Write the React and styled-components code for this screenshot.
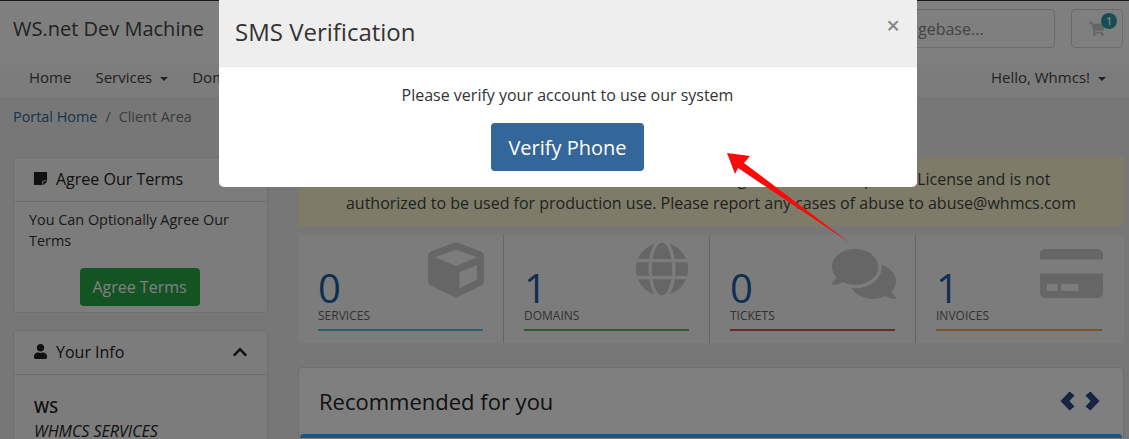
import React from "react";
import styled, { createGlobalStyle } from "styled-components";
import {
  FaStickyNote,
  FaUser,
  FaChevronUp,
  FaCube,
  FaGlobe,
  FaComments,
  FaCreditCard,
  FaShoppingCart,
} from "react-icons/fa";

const GlobalStyle = createGlobalStyle`
  html, body {
    margin: 0;
    padding: 0;
  }

  body {
    background: #eeeeee;
    color: #333;
    font-family: "Open Sans", "Liberation Sans", sans-serif;
    font-size: 14.4px;
    overflow: hidden;
  }

  * {
    box-sizing: border-box;
  }
`;

const Page = styled.div`
  height: 439px;
  overflow: hidden;
  position: relative;
  width: 1129px;
`;

const TopBar = styled.header`
  align-items: center;
  background: #fff;
  border-top: 1px solid #333;
  display: flex;
  height: 65px;
  padding: 8px 6px 17px 13px;
`;

const Brand = styled.div`
  color: #444;
  flex: 1;
  font-size: 20px;
`;

const Search = styled.div`
  align-items: center;
  border: 1px solid #d4d4d4;
  border-radius: 4px;
  color: #888;
  display: flex;
  font-size: 16px;
  height: 39px;
  margin-right: 16px;
  padding: 0 12px 0 14px;
  width: 300px;
`;

const Cart = styled.div`
  align-items: center;
  border: 1px solid #d4d4d4;
  border-radius: 4px;
  color: #ccc;
  display: flex;
  font-size: 16px;
  height: 39px;
  justify-content: center;
  position: relative;
  width: 52px;
`;

const CartBadge = styled.span`
  align-items: center;
  background: #2c9cb0;
  border-radius: 50%;
  color: #fff;
  display: flex;
  font-size: 10px;
  font-weight: 600;
  height: 16px;
  justify-content: center;
  position: absolute;
  right: 5px;
  top: 3px;
  width: 16px;
`;

const NavBar = styled.nav`
  align-items: center;
  background: #f8f8f8;
  display: flex;
  height: 32px;
  justify-content: space-between;
  padding: 0 23px 9px 29px;
`;

const NavList = styled.div`
  display: flex;
  gap: 24px;
`;

const NavItem = styled.span`
  color: #444;
  font-size: 15px;
  white-space: nowrap;

  &.caret::after {
    border-left: 4px solid transparent;
    border-right: 4px solid transparent;
    border-top: 4px solid currentColor;
    content: "";
    display: inline-block;
    margin-left: 8px;
    vertical-align: 2px;
  }
`;

const Breadcrumb = styled.div`
  color: #777;
  display: flex;
  gap: 8px;
  height: 60px;
  padding: 10px 13px 0;
`;

const Crumb = styled.span`
  color: ${props => (props.$link ? "#336699" : "#777")};
`;

const Columns = styled.div`
  display: grid;
  gap: 30px;
  grid-template-columns: 255px 826px;
  padding-left: 13px;
`;

const Sidebar = styled.aside`
  display: flex;
  flex-direction: column;
  gap: 17px;
`;

const Card = styled.section`
  background: #f8f8f8;
  border: 1px solid #ddd;
  border-radius: 4px;
`;

const CardHead = styled.div`
  align-items: center;
  border-bottom: 1px solid #ddd;
  color: #222;
  display: flex;
  font-size: 16px;
  gap: 8px;
  height: 44px;
  padding: 0 19px 2px;

  svg {
    font-size: 15px;
  }
`;

const CollapseIcon = styled(FaChevronUp)`
  margin-left: auto;

  && {
    font-size: 16px;
  }
`;

const CardBody = styled.div`
  line-height: 21px;
  padding: 7px 15px 6px;
`;

const AgreeRow = styled.div`
  display: flex;
  justify-content: center;
  margin-top: 17px;
  padding-right: 2px;
`;

const AgreeButton = styled.div`
  align-items: center;
  background: #28a745;
  border-radius: 4px;
  color: #fff;
  display: flex;
  font-size: 16px;
  height: 38px;
  justify-content: center;
  width: 120px;
`;

const InfoBody = styled.div`
  color: #222;
  font-size: 16px;
  line-height: 24px;
  padding: 20px 20px 0;
`;

const InfoName = styled.div`
  font-weight: 600;
`;

const InfoCompany = styled.div`
  font-style: italic;
`;

const Main = styled.main`
  display: flex;
  flex-direction: column;
`;

const Alert = styled.div`
  background: #fcf8d0;
  color: #444;
  font-size: 16px;
  height: 69px;
  line-height: 24px;
  padding: 10px 10px;
  text-align: center;
  white-space: nowrap;
`;

const Tiles = styled.div`
  background: #f8f8f8;
  display: grid;
  grid-template-columns: repeat(4, 206px);
  height: 108px;
  margin-top: 9px;
`;

const Tile = styled.div`
  border-right: ${props => (props.$last ? "none" : "1px solid #ccc")};
  padding: 10px 20px 0;
`;

const TileTop = styled.div`
  display: flex;
  height: 63px;
  justify-content: space-between;
`;

const TileNumber = styled.div`
  align-self: flex-end;
  color: #1e5fa4;
  font-size: 40px;
  line-height: 40px;
`;

const TileIcon = styled.div`
  color: #ccc;
  font-size: ${props => props.$size}px;
  line-height: 0;
  margin-right: ${props => props.$nudge}px;
  margin-top: -3px;
`;

const TileLabel = styled.div`
  color: #666;
  font-size: 12px;
  font-weight: 500;
  line-height: 16px;
  text-transform: uppercase;
`;

const TileLine = styled.div`
  background: ${props => props.$color};
  height: 2px;
  margin-top: 5px;
`;

const Recommended = styled.section`
  background: #ffffff;
  border: 1px solid #ddd;
  border-radius: 4px;
  margin-top: 24px;
`;

const RecommendedHead = styled.div`
  align-items: center;
  color: #222;
  display: flex;
  font-size: 22px;
  height: 66px;
  justify-content: space-between;
  padding: 0 23px 0 20px;
`;

const RecommendedBody = styled.div`
  border-radius: 4px 4px 0 0;
  border-top: 4px solid #3caaff;
  height: 20px;
  margin: 0 1px;
`;

const Arrows = styled.div`
  display: flex;
  gap: 10px;
`;

const Arrow = styled.svg`
  display: block;
  fill: #2b4a86;
  height: 20px;
  width: 15px;
`;

const Backdrop = styled.div`
  background: rgba(0, 0, 0, 0.5);
  inset: 0;
  position: absolute;
`;

const Modal = styled.div`
  background: #fff;
  border-radius: 0 0 5px 5px;
  left: 219px;
  overflow: hidden;
  position: absolute;
  top: 0;
  width: 698px;
`;

const ModalHead = styled.div`
  align-items: flex-start;
  background: #eeeeee;
  border-bottom: 1px solid #e4e4ea;
  display: flex;
  height: 67px;
  justify-content: space-between;
  padding: 15px 17px 0 16px;
`;

const ModalTitle = styled.h4`
  color: #333;
  font-size: 24px;
  font-weight: 400;
  line-height: 33px;
  margin: 0;
`;

const CloseMark = styled.span`
  color: #888;
  font-size: 24px;
  font-weight: 600;
  line-height: 20px;
`;

const ModalBody = styled.div`
  align-items: center;
  display: flex;
  flex-direction: column;
  height: 120px;
  padding: 17px 1px 0 0;
`;

const ModalText = styled.p`
  color: #333;
  font-size: 16px;
  line-height: 22px;
  margin: 0 0 17px;
`;

const VerifyButton = styled.div`
  align-items: center;
  background: #336699;
  border-radius: 4px;
  color: #fff;
  display: flex;
  font-size: 20px;
  height: 48px;
  justify-content: center;
  width: 153px;
`;

const Pointer = styled.svg`
  height: 100px;
  left: 720px;
  position: absolute;
  top: 150px;
  width: 140px;
`;

const tiles = [
  { value: 0, label: "Services", color: "#5bc0de", Icon: FaCube, size: 56, nudge: -1 },
  { value: 1, label: "Domains", color: "#5cb85c", Icon: FaGlobe, size: 54, nudge: 0 },
  { value: 0, label: "Tickets", color: "#d9534f", Icon: FaComments, size: 64, nudge: -1 },
  { value: 1, label: "Invoices", color: "#f0ad4e", Icon: FaCreditCard, size: 63, nudge: -1 },
];

export default function App() {
  return (
    <Page>
      <GlobalStyle />
      <TopBar>
        <Brand>WS.net Dev Machine</Brand>
        <Search>Search our knowledgebase...</Search>
        <Cart>
          <FaShoppingCart />
          <CartBadge>1</CartBadge>
        </Cart>
      </TopBar>
      <NavBar>
        <NavList>
          <NavItem>Home</NavItem>
          <NavItem className="caret">Services</NavItem>
          <NavItem className="caret">Domains</NavItem>
          <NavItem className="caret">Billing</NavItem>
          <NavItem className="caret">Support</NavItem>
        </NavList>
        <NavItem className="caret">Hello, Whmcs!</NavItem>
      </NavBar>
      <Breadcrumb>
        <Crumb $link>Portal Home</Crumb>
        <span>/</span>
        <Crumb>Client Area</Crumb>
      </Breadcrumb>
      <Columns>
        <Sidebar>
          <Card>
            <CardHead>
              <FaStickyNote />
              Agree Our Terms
            </CardHead>
            <CardBody>
              You Can Optionally Agree Our Terms
              <AgreeRow>
                <AgreeButton>Agree Terms</AgreeButton>
              </AgreeRow>
            </CardBody>
          </Card>
          <Card>
            <CardHead>
              <FaUser />
              Your Info
              <CollapseIcon />
            </CardHead>
            <InfoBody>
              <InfoName>WS</InfoName>
              <InfoCompany>WHMCS SERVICES</InfoCompany>
            </InfoBody>
          </Card>
        </Sidebar>
        <Main>
          <Alert>
            Dev License: This installation of WHMCS is running under a Development License and is not
            <br />
            authorized to be used for production use. Please report any cases of abuse to abuse@whmcs.com
          </Alert>
          <Tiles>
            {tiles.map((tile, i) => (
              <Tile key={tile.label} $last={i === tiles.length - 1}>
                <TileTop>
                  <TileNumber>{tile.value}</TileNumber>
                  <TileIcon $size={tile.size} $nudge={tile.nudge}>
                    <tile.Icon />
                  </TileIcon>
                </TileTop>
                <TileLabel>{tile.label}</TileLabel>
                <TileLine $color={tile.color} />
              </Tile>
            ))}
          </Tiles>
          <Recommended>
            <RecommendedHead>
              Recommended for you
              <Arrows>
                <Arrow viewBox="0 0 15 20">
                  <polygon points="9.5,0.5 14.5,4.5 9.5,10 14.5,15.5 9.5,19.5 0.5,10" />
                </Arrow>
                <Arrow viewBox="0 0 15 20">
                  <polygon points="5.5,0.5 0.5,4.5 5.5,10 0.5,15.5 5.5,19.5 14.5,10" />
                </Arrow>
              </Arrows>
            </RecommendedHead>
            <RecommendedBody />
          </Recommended>
        </Main>
      </Columns>
      <Backdrop />
      <Modal>
        <ModalHead>
          <ModalTitle>SMS Verification</ModalTitle>
          <CloseMark>×</CloseMark>
        </ModalHead>
        <ModalBody>
          <ModalText>Please verify your account to use our system</ModalText>
          <VerifyButton>Verify Phone</VerifyButton>
        </ModalBody>
      </Modal>
      <Pointer viewBox="720 150 140 100">
        <polygon fill="#fb0a0a" points="727,153 750,156 744,163 850,243 738,168 735,174" />
      </Pointer>
    </Page>
  );
}
